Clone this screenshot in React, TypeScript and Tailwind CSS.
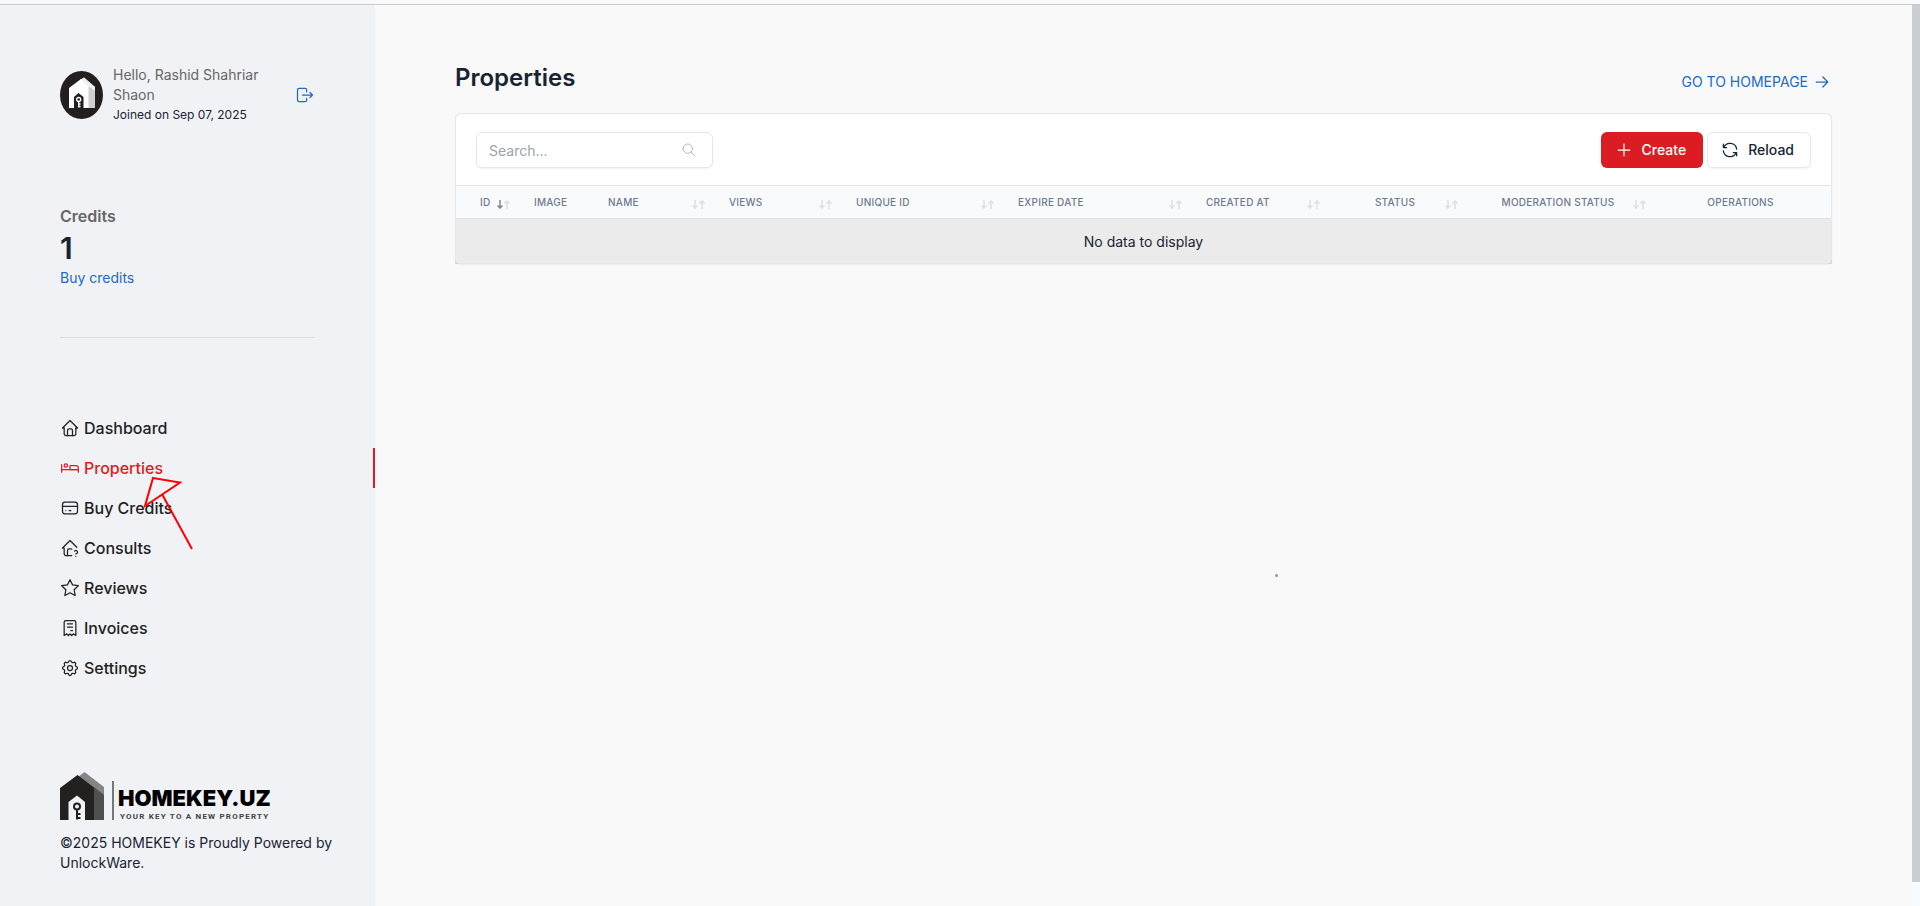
import { useState } from 'react';
import type { ReactNode } from 'react';

interface IconProps {
  className?: string;
  children: ReactNode;
}

const Icon = ({ className = 'size-5', children }: IconProps) => (
  <svg
    viewBox="0 0 24 24"
    fill="none"
    stroke="currentColor"
    strokeWidth="1.5"
    strokeLinecap="round"
    strokeLinejoin="round"
    className={`shrink-0 ${className}`}
    aria-hidden="true"
  >
    {children}
  </svg>
);

const navItems = [
  {
    name: 'Dashboard',
    icon: (
      <>
        <path d="M5 12H3l9-9 9 9h-2" />
        <path d="M5 12v7a2 2 0 0 0 2 2h10a2 2 0 0 0 2-2v-7" />
        <path d="M9 21v-6a2 2 0 0 1 2-2h2a2 2 0 0 1 2 2v6" />
      </>
    ),
  },
  {
    name: 'Properties',
    icon: (
      <>
        <path d="M5 9a2 2 0 1 0 4 0a2 2 0 1 0-4 0" />
        <path d="M22 17v-3H2" />
        <path d="M2 8v9" />
        <path d="M12 14h10v-2a3 3 0 0 0-3-3h-7v5z" />
      </>
    ),
  },
  {
    name: 'Buy Credits',
    icon: (
      <>
        <path d="M3 8a3 3 0 0 1 3-3h12a3 3 0 0 1 3 3v8a3 3 0 0 1-3 3H6a3 3 0 0 1-3-3z" />
        <path d="M3 10h18" />
        <path d="M7 15h.01" />
        <path d="M11 15h2" />
      </>
    ),
  },
  {
    name: 'Consults',
    icon: (
      <>
        <path d="M20.136 11.136L12 3l-9 9h2v7a2 2 0 0 0 2 2h7" />
        <path d="M9 21v-6a2 2 0 0 1 2-2h2c.467 0 .896.16 1.236.428" />
        <path d="M19 22v.01" />
        <path d="M19 19a2.003 2.003 0 0 0 .914-3.782a1.98 1.98 0 0 0-2.414.483" />
      </>
    ),
  },
  {
    name: 'Reviews',
    icon: (
      <path d="M12 17.75l-6.172 3.245l1.179-6.873l-5-4.867l6.9-1l3.086-6.253l3.086 6.253l6.9 1l-5 4.867l1.179 6.873z" />
    ),
  },
  {
    name: 'Invoices',
    icon: (
      <>
        <path d="M5 21V5a2 2 0 0 1 2-2h10a2 2 0 0 1 2 2v16l-3-2-2 2-2-2-2 2-2-2-3 2" />
        <path d="M9 7h6M9 11h6M13 15h2" />
      </>
    ),
  },
  {
    name: 'Settings',
    icon: (
      <>
        <path d="M10.325 4.317c.426-1.756 2.924-1.756 3.35 0a1.724 1.724 0 0 0 2.573 1.066c1.543-.94 3.31.826 2.37 2.37a1.724 1.724 0 0 0 1.065 2.572c1.756.426 1.756 2.924 0 3.35a1.724 1.724 0 0 0-1.066 2.573c.94 1.543-.826 3.31-2.37 2.37a1.724 1.724 0 0 0-2.572 1.065c-.426 1.756-2.924 1.756-3.35 0a1.724 1.724 0 0 0-2.573-1.066c-1.543.94-3.31-.826-2.37-2.37a1.724 1.724 0 0 0-1.065-2.572c-1.756-.426-1.756-2.924 0-3.35a1.724 1.724 0 0 0 1.066-2.573c-.94-1.543.826-3.31 2.37-2.37c1 .608 2.296.07 2.572-1.065z" />
        <path d="M9 12a3 3 0 1 0 6 0a3 3 0 0 0-6 0" />
      </>
    ),
  },
];

const columns = [
  { name: 'ID', col: 'w-[66px]', cell: 'pl-6 text-left', sort: 'desc' },
  { name: 'Image', col: 'w-[74px]', cell: 'pl-3 text-left' },
  { name: 'Name', col: 'w-[121px]', cell: 'pl-3 text-left', sort: 'none' },
  { name: 'Views', col: 'w-[127px]', cell: 'pl-3 text-left', sort: 'none' },
  { name: 'Unique ID', col: 'w-[162px]', cell: 'pl-3 text-left', sort: 'none' },
  { name: 'Expire date', col: 'w-[188px]', cell: 'pl-3 text-left', sort: 'none' },
  { name: 'Created At', col: 'w-[138px]', cell: 'pl-3 text-left', sort: 'none' },
  { name: 'Status', col: 'w-[138px]', cell: 'pl-3 pr-6 text-center', sort: 'none' },
  { name: 'Moderation status', col: 'w-[188px]', cell: 'pl-3 pr-6 text-center', sort: 'none' },
  { name: 'Operations', col: 'w-[173px]', cell: 'pl-3 pr-5 text-center' },
];

const SortArrows = ({ sort }: { sort: string }) => (
  <svg
    viewBox="0 0 13 9"
    className="absolute right-3 bottom-[9px] h-[9px] w-[13px]"
    fill="none"
    stroke="#1f2937"
    strokeWidth="1.5"
    aria-hidden="true"
  >
    <path d="M3 0v8M0.5 5.5L3 8l2.500-2.500" opacity={sort === 'desc' ? 0.55 : 0.12} />
    <path d="M10 9V1M7.500 3.500L10 1l2.500 2.500" opacity="0.12" />
  </svg>
);

const Avatar = () => (
  <svg viewBox="0 0 43 48" className="h-12 w-[43px] shrink-0" role="img" aria-label="Avatar">
    <ellipse cx="21.500" cy="24" rx="21.500" ry="24" fill="#231f20" />
    <path d="M20 9L24 6.500L35 16V37H28z" fill="#cfcfcf" />
    <path d="M20 9L24 6.500L35 16V20L28 15z" fill="#efefef" />
    <path d="M9 17L21 8L28.500 15V37H9z" fill="#fff" />
    <path d="M14 37V26L18.500 22L23.500 26V37z" fill="#231f20" />
    <circle cx="18.700" cy="28.500" r="2" fill="none" stroke="#fff" strokeWidth="1.300" />
    <path d="M18.700 30.500V36.500M18.700 33H20.500M18.700 35.500H20.500" stroke="#fff" strokeWidth="1.300" />
  </svg>
);

const Logo = () => (
  <a href="#home" className="flex h-12 items-end text-black" aria-label="HOMEKEY.UZ">
    <svg viewBox="0 0 44 48" className="h-12 w-11 shrink-0" aria-hidden="true">
      <path d="M18 5L24.500 0L44 15V48H34V18z" fill="#858585" />
      <path d="M34 15L44 23V48H34z" fill="#4f504f" />
      <path d="M0 16L17.500 3L34 15.500V48H0z" fill="#222120" />
      <path d="M8.500 48V30L17 23.500L25 30V48z" fill="#f0f2f6" />
      <circle cx="17" cy="34.500" r="3" fill="none" stroke="#222120" strokeWidth="2" />
      <path d="M17 37.500V47.500M17 42H20.500M17 46H20.500" stroke="#222120" strokeWidth="2" />
    </svg>
    <span className="ml-2 h-[39px] w-0.5 bg-[#777]" />
    <span className="ml-1 flex flex-col gap-1">
      <span className="text-[22px] leading-6 font-black">HOMEKEY.UZ</span>
      <span className="pl-0.5 font-['Roboto',sans-serif] text-[8px] leading-[6px] font-bold tracking-[0.15em] text-[#444]">
        YOUR KEY TO A NEW PROPERTY
      </span>
    </span>
  </a>
);

const Sidebar = () => (
  <aside className="relative flex w-[375px] shrink-0 flex-col bg-[#f0f2f6] pt-[60px] pb-[33px] pl-[60px]">
    <div className="mr-[60px] flex items-center">
      <Avatar />
      <div className="ml-2.5 flex-1">
        <div className="max-w-[160px] text-sm text-[#666]">Hello, Rashid Shahriar Shaon</div>
        <div className="text-xs/5">Joined on Sep 07, 2025</div>
      </div>
      <a href="#logout" aria-label="Logout" className="text-[#206bc4]">
        <Icon>
          <path d="M14 8V6a2 2 0 0 0-2-2H5a2 2 0 0 0-2 2v12a2 2 0 0 0 2 2h7a2 2 0 0 0 2-2v-2" />
          <path d="M9 12h12l-3-3M18 15l3-3" />
        </Icon>
      </a>
    </div>

    <div className="mt-[79px] mr-[60px] border-b border-[#dcdee2] pb-[49px]">
      <div className="text-base/6 font-semibold text-[#666]">Credits</div>
      <div className="text-[30px]/10 font-semibold">1</div>
      <a href="#credits" className="block text-sm text-[#206bc4]">
        Buy credits
      </a>
    </div>

    <nav className="mt-[70px]">
      {navItems.map((item) => (
        <a
          key={item.name}
          href={`#${item.name}`}
          className={`flex h-10 items-center gap-1 text-base font-medium ${
            item.name === 'Properties' ? 'border-r-2 border-[#db1d23] text-[#db1d23]' : 'text-[#222]'
          }`}
        >
          <Icon>{item.icon}</Icon>
          {item.name}
        </a>
      ))}
    </nav>

    <footer className="mt-auto">
      <Logo />
      <p className="mt-[13px] max-w-[280px] text-sm">©2025 HOMEKEY is Proudly Powered by UnlockWare.</p>
    </footer>

    {/* Pointer drawn over the menu */}
    <svg
      viewBox="0 0 52 76"
      className="pointer-events-none absolute top-[471px] left-[143px] h-[76px] w-[52px]"
      fill="none"
      stroke="#ff0000"
      strokeWidth="2"
      aria-hidden="true"
    >
      <path d="M10 2L37 6.500L2 30zM19.500 19L49 73" />
    </svg>
  </aside>
);

const PropertiesTable = () => {
  const [search, setSearch] = useState('');

  return (
    <div className="rounded-t-md bg-[#dce1e7]">
      <div className="overflow-hidden rounded-md border border-[#e6e7e9] bg-white shadow-xs">
        <div className="flex items-center justify-between px-5 pt-[18px] pb-[17px]">
          <div className="relative">
            <input
              type="text"
              aria-label="Search"
              value={search}
              onChange={(e) => setSearch(e.target.value)}
              placeholder="Search..."
              className="block h-9 w-[237px] rounded-md border border-[#e6e7eb] bg-white pr-9 pl-3 text-sm shadow-xs placeholder:text-[#9ca3af]"
            />
            <Icon className="absolute top-[10px] right-4 size-4 text-[#b4b7bc]">
              <path d="M3 10a7 7 0 1 0 14 0a7 7 0 1 0-14 0" />
              <path d="M21 21l-6-6" />
            </Icon>
          </div>
          <div className="flex gap-1">
            <button className="flex h-9 items-center gap-2 rounded-md bg-[#db1d23] pr-[17px] pl-[13px] text-sm font-medium text-white">
              <Icon>
                <path d="M12 5v14M5 12h14" />
              </Icon>
              Create
            </button>
            <button className="flex h-9 items-center gap-2 rounded-md border border-[#e6e7e9] bg-white pr-4 pl-3 text-sm font-medium shadow-xs">
              <Icon>
                <path d="M20 11A8.100 8.100 0 0 0 4.500 9M4 5v4h4" />
                <path d="M4 13a8.100 8.100 0 0 0 15.500 2m.5 4v-4h-4" />
              </Icon>
              Reload
            </button>
          </div>
        </div>
        <table className="w-full table-fixed border-t border-[#e3e6ea]">
          <colgroup>
            {columns.map((c) => (
              <col key={c.name} className={c.col} />
            ))}
          </colgroup>
          <thead>
            <tr className="h-[33px] border-b border-[#dce1e7] bg-[#f9fafc]">
              {columns.map((c) => (
                <th
                  key={c.name}
                  className={`relative text-[10px]/4 font-medium tracking-wide whitespace-nowrap text-[#6c7a91] uppercase ${c.cell}`}
                >
                  {c.name}
                  {c.sort && <SortArrows sort={c.sort} />}
                </th>
              ))}
            </tr>
          </thead>
          <tbody>
            <tr className="h-11 bg-[#ebebeb]">
              <td colSpan={columns.length} className="pt-0.5 text-center text-sm">
                No data to display
              </td>
            </tr>
          </tbody>
        </table>
      </div>
    </div>
  );
};

const App = () => (
  <div className="flex min-h-screen flex-col bg-[#f9f9f9] font-[Inter,sans-serif] text-[#182433]">
    <div className="h-[5px] border-b border-[#c8cacd] bg-[#f9f9fb]" />
    <div className="flex flex-1">
      <Sidebar />
      <main className="relative flex-1 px-20 pt-[57px]">
        <div className="mb-[19px] flex items-end justify-between">
          <h1 className="text-2xl font-semibold">Properties</h1>
          <a href="#homepage" className="flex items-center gap-1 pb-0.5 text-sm text-[#206bc4]">
            GO TO HOMEPAGE
            <Icon>
              <path d="M5 12h14M13 18l6-6M13 6l6 6" />
            </Icon>
          </a>
        </div>
        <PropertiesTable />
        <span className="absolute top-[569px] left-[900px] size-[3px] rounded-full bg-[#999]" />
      </main>
      <div className="w-2 bg-[#fafbfd] pb-6">
        <div className="h-full bg-[#caced3]" />
      </div>
    </div>
  </div>
);

export default App;
